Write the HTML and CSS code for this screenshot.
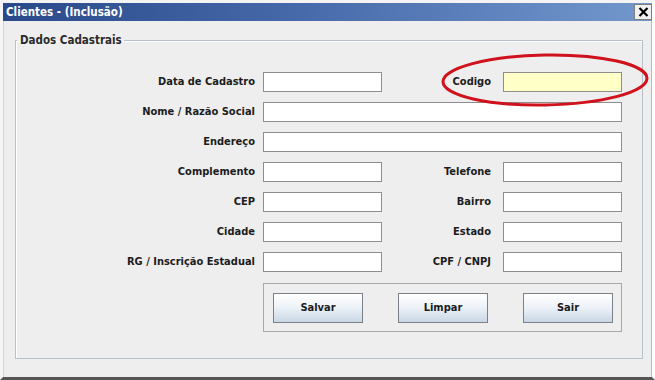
FILE: index.html
```html
<!DOCTYPE html>
<html lang="pt">
<head>
<meta charset="utf-8">
<title>Clientes - (Inclusão)</title>
<link rel="stylesheet" href="styles.css">
</head>
<body>
<div class="window">
  <div class="titlebar">
    <span class="title">Clientes - (Inclusão)</span>
    <span class="close">
      <svg width="11" height="10" viewBox="0 0 11 10"><path d="M1.5 1 L9.5 9 M9.5 1 L1.5 9" stroke="#000" stroke-width="2.2" fill="none"/></svg>
    </span>
  </div>
  <div class="content">
    <fieldset class="group">
      <legend>Dados Cadastrais</legend>
      <div class="form">
        <label class="lbl">Data de Cadastro</label>
        <div class="field"></div>
        <label class="lbl lbl-r">Codigo</label>
        <div class="field field-yellow"></div>

        <label class="lbl">Nome / Razão Social</label>
        <div class="field span3"></div>

        <label class="lbl">Endereço</label>
        <div class="field span3"></div>

        <label class="lbl">Complemento</label>
        <div class="field"></div>
        <label class="lbl lbl-r">Telefone</label>
        <div class="field"></div>

        <label class="lbl">CEP</label>
        <div class="field"></div>
        <label class="lbl lbl-r">Bairro</label>
        <div class="field"></div>

        <label class="lbl">Cidade</label>
        <div class="field"></div>
        <label class="lbl lbl-r">Estado</label>
        <div class="field"></div>

        <label class="lbl">RG / Inscrição Estadual</label>
        <div class="field"></div>
        <label class="lbl lbl-r">CPF / CNPJ</label>
        <div class="field"></div>
      </div>
      <div class="buttons">
        <div class="btn">Salvar</div>
        <div class="btn">Limpar</div>
        <div class="btn">Sair</div>
      </div>
    </fieldset>
  </div>
  <svg class="mark" width="220" height="60" viewBox="0 0 220 60">
    <ellipse cx="108" cy="30" rx="102" ry="25" fill="none" stroke="#d0121c" stroke-width="3" transform="rotate(-1 108 30)"/>
  </svg>
</div>
</body>
</html>
```

FILE: styles.css
```css
* { box-sizing: border-box; }
html, body { margin: 0; padding: 0; background: #ffffff; }
body {
  font-family: "DejaVu Sans Condensed", "DejaVu Sans", Tahoma, sans-serif;
  font-size: 11px;
  font-weight: bold;
  color: #1c1c1c;
}
.window {
  position: relative;
  width: 655px;
  height: 380px;
  background: #eeeeee;
  border-left: 3px solid #f6f6f6;
  border-right: 3px solid #ffffff;
  border-bottom: 3px solid #555555;
  border-top: 3px solid #f4f4f4;
  display: flex;
  flex-direction: column;
  box-shadow: inset 1px 0 0 #d4d4d4, inset -1px 0 0 #bdbdbd;
}
.titlebar {
  height: 18px;
  display: flex;
  align-items: center;
  background: linear-gradient(to right, #29498a 0%, #4669aa 45%, #7398cd 100%);
  padding: 0 0 0 3px;
  flex: none;
}
.title {
  color: #ffffff;
  font-size: 11.5px;
  font-weight: bold;
}
.close {
  margin-left: auto;
  width: 18px;
  height: 16px;
  background: #f0f0f0;
  border: 1px solid #7e7e7e;
  display: flex;
  align-items: center;
  justify-content: center;
}
.content {
  flex: 1;
  padding: 12px 9px 0 12px;
}
.group {
  margin: 0;
  height: 326px;
  border: 1px solid #b9c0cc;
  box-shadow: inset 1px 1px 0 #ffffff;
  padding: 0;
}
.group legend {
  margin-left: 1px;
  padding: 0 2px 0 3px;
  font-size: 11.5px;
  color: #2a2a2a;
}
.form {
  margin-top: 25px;
  display: grid;
  grid-template-columns: 247px 119px 121px 119px;
  grid-auto-rows: 20px;
  row-gap: 10px;
}
.lbl {
  text-align: right;
  padding-right: 8px;
  line-height: 20px;
  white-space: nowrap;
}
.lbl-r { padding-right: 12px; }
.field {
  background: #ffffff;
  border: 1px solid #8e8e8e;
}
.field-yellow { background: #ffffc8; }
.span3 { grid-column: span 3; }
.buttons {
  margin: 11px 0 0 247px;
  width: 359px;
  height: 49px;
  border: 1px solid #a8a8a8;
  display: flex;
  justify-content: space-between;
  align-items: center;
  padding: 0 8px 0 9px;
}
.btn {
  width: 90px;
  height: 30px;
  border: 1px solid #7c8088;
  background: linear-gradient(to bottom, #ffffff 0%, #eef3f8 45%, #c9d7e6 100%);
  display: flex;
  align-items: center;
  justify-content: center;
  font-size: 11px;
}
.mark {
  position: absolute;
  left: 434px;
  top: 47px;
  pointer-events: none;
}
```
